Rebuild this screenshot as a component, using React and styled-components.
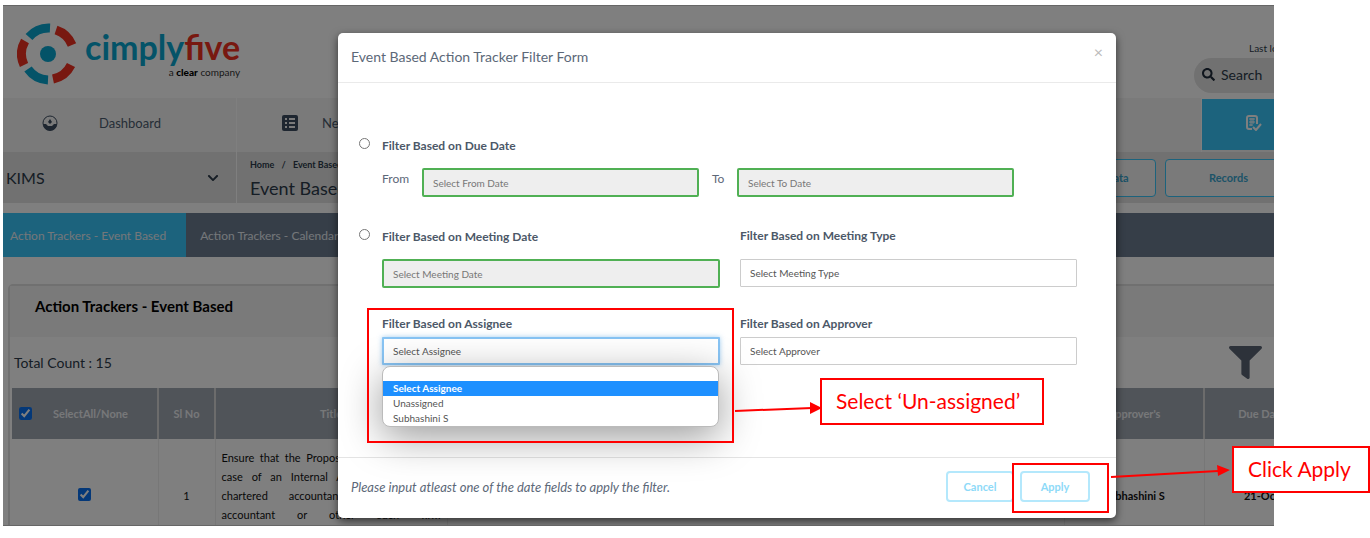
import React from "react";
import styled, { createGlobalStyle } from "styled-components";
import { FaSearch, FaFilter, FaChevronDown } from "react-icons/fa";

const Global = createGlobalStyle`
  *, *::before, *::after { box-sizing: border-box; }
  body { margin: 0; background: #fff; font-family: Lato, "Open Sans", sans-serif; color: #2c3a4a; }
  button, input, select { font-family: inherit; }
`;

const blue = "#38c6fa";
const slate = "#6c7c90";
const red = "#ff0000";

const Figure = styled.main`
  position: relative;
  min-height: 100vh;
  padding: 5px 96px 0 3px;
  overflow: hidden;
`;
const Shot = styled.div`
  position: relative;
  height: calc(100vh - 17px);
  overflow: hidden;
  border-top: 1px solid #666;
  border-bottom: 1px solid #666;
`;
const Page = styled.div`
  position: relative;
  width: calc(100% + 177px);
`;

const Header = styled.header`
  display: flex;
  justify-content: space-between;
  height: 92px;
`;
const Brand = styled.a`
  display: flex;
  align-items: flex-start;
  gap: 6px;
  padding: 17px 0 0 14px;
  text-decoration: none;
`;
const BrandText = styled.span`
  display: flex;
  flex-direction: column;
  align-items: flex-end;
  padding-top: 5px;
`;
const BrandName = styled.span`
  color: #08a6d0;
  font-size: 34px;
  line-height: 38px;
  font-weight: 700;
  em { font-style: normal; color: #f03020; }
`;
const BrandTag = styled.span`
  color: #333;
  font-size: 10px;
  line-height: 12px;
  b { color: #000; font-weight: 900; }
`;
const HeaderSide = styled.div`
  width: 257px;
  padding-top: 36px;
`;
const LastLogin = styled.div`
  padding-left: 55px;
  font-size: 10px;
  line-height: 12px;
  margin-bottom: 4px;
`;
const SearchBox = styled.label`
  display: flex;
  align-items: center;
  gap: 6px;
  height: 35px;
  padding: 0 8px 3px;
  border-radius: 18px;
  background: #e2e2e2;
  color: #1f2b3a;
`;
const SearchInput = styled.input`
  border: 0;
  background: none;
  padding: 0;
  min-width: 0;
  font-size: 14px;
  &::placeholder { color: #2c3a4a; opacity: 1; }
`;

const Nav = styled.nav`
  display: flex;
  height: 54px;
  background: #f5f5f5;
`;
const NavItem = styled.a`
  display: flex;
  align-items: center;
  flex: ${(p) => p.$flex || "0 0 234px"};
  gap: ${(p) => p.$gap || 0}px;
  padding: 0 0 5px ${(p) => p.$pad || 0}px;
  border-right: 1px solid #fff;
  color: #4c5c6e;
  font-size: 13px;
  text-decoration: none;
`;
const ActiveNavItem = styled(NavItem)`
  flex: 0 0 249px;
  height: 52px;
  padding-top: 2px;
  border-top: 1px solid #fff;
  background: ${blue};
  color: #fff;
`;

const Band = styled.div`
  display: flex;
  height: 51px;
  background: #e2e2e2;
`;
const Company = styled.button`
  display: flex;
  align-items: center;
  justify-content: space-between;
  flex: 0 0 234px;
  padding: 0 17px 0 3px;
  border: 0;
  border-right: 1px solid #fff;
  background: none;
  color: #2c3a4a;
  font-size: 16px;
`;
const Crumbs = styled.div`
  flex: 1;
  padding: 6px 0 0 13px;
`;
const CrumbTrail = styled.div`
  font-size: 9px;
  line-height: 13px;
  font-weight: 700;
  color: #2c3a4a;
  span { margin: 0 5px; }
`;
const PageTitle = styled.h1`
  margin: 4px 0 0;
  font-size: 18px;
  line-height: 26px;
  font-weight: 400;
`;
const BandActions = styled.div`
  display: flex;
  align-items: center;
  gap: 9px;
  padding-right: 159px;
`;
const OutlineButton = styled.button`
  width: ${(p) => p.$w || 127}px;
  height: ${(p) => p.$h || 38}px;
  border: 1px solid ${(p) => p.$edge || blue};
  border-radius: 4px;
  background: ${(p) => p.$bg || "#f5f5f5"};
  color: ${(p) => p.$ink || "#3aa6d0"};
  font-size: 11px;
  font-weight: 700;
`;
const FootButton = styled(OutlineButton)`
  height: 31px;
  border: 2px solid #b4e8fc;
  background: #fff;
  color: #8edaf8;
`;

const Tabs = styled.div`
  display: flex;
  height: 44px;
  margin-top: 10px;
  background: ${slate};
`;
const Tab = styled.button`
  padding: ${(p) => (p.$active ? "0 20px 0 7px" : "0 14px")};
  border: 0;
  background: ${(p) => (p.$active ? blue : "transparent")};
  color: #e8eef4;
  font-size: 12px;
`;

const Card = styled.section`
  margin: 27px 5px 0;
  border: 2px solid #e0e0e0;
  border-radius: 5px;
`;
const CardHead = styled.h2`
  display: flex;
  align-items: center;
  height: 51px;
  margin: 0;
  padding: 0 0 12px 25px;
  background: #f5f5f5;
  color: #000;
  font-size: 15px;
  font-weight: 700;
`;
const CardBar = styled.div`
  display: flex;
  align-items: center;
  justify-content: space-between;
  height: 51px;
  padding: 0 182px 0 4px;
  font-size: 14px;
`;

const Table = styled.table`
  width: calc(100% - 4px);
  margin-left: 2px;
  table-layout: fixed;
  border-collapse: collapse;
  font-size: 11px;
`;
const Th = styled.th`
  width: ${(p) => (p.$w ? `${p.$w}px` : "auto")};
  height: 51px;
  padding: 0;
  border-right: 2px solid #d8d8d8;
  background: #a0a8b2;
  color: #eef0f2;
  font-size: 11px;
  font-weight: 700;
`;
const SelectAll = styled.label`
  display: flex;
  align-items: center;
  gap: 21px;
  padding-left: 7px;
`;
const Td = styled.td`
  height: 112px;
  padding: 0 6px;
  border-right: 1px solid #eee;
  color: #111;
  text-align: center;
  font-weight: ${(p) => (p.$bold ? 700 : 400)};
`;
const Task = styled.div`
  line-height: 19px;
  text-align: justify;
  text-align-last: justify;
`;
const Check = styled.input`
  width: 13px;
  height: 13px;
  margin: 0;
  accent-color: #0870f0;
`;

const Backdrop = styled.div`
  position: absolute;
  inset: 0;
  background: rgba(0, 0, 0, 0.5);
`;
const Modal = styled.form`
  position: relative;
  width: 778px;
  margin: 27px auto 0;
  border-radius: 5px;
  background: #fff;
  box-shadow: 0 3px 8px rgba(0, 0, 0, 0.6);
  color: #5c6878;
`;
const ModalHead = styled.div`
  display: flex;
  justify-content: space-between;
  height: 50px;
  padding: 12px 13px 0 13px;
  border-bottom: 1px solid #eaeaea;
`;
const ModalTitle = styled.h3`
  margin: 0;
  font-size: 14px;
  line-height: 24px;
  font-weight: 400;
`;
const Close = styled.button`
  align-self: flex-start;
  padding: 0;
  border: 0;
  background: none;
  color: #bbb;
  font-size: 16px;
  line-height: 14px;
`;
const ModalBody = styled.div`
  display: flex;
  flex-direction: column;
  height: 374px;
  padding: 52px 39px 0 21px;
`;
const Choice = styled.label`
  display: flex;
  align-items: center;
  gap: 12px;
  height: 20px;
  color: #4c5868;
  font-size: 12px;
  font-weight: 700;
`;
const Radio = styled.input`
  width: 11px;
  height: 11px;
  margin: 0 0 4px;
`;
const DateRow = styled.div`
  display: grid;
  grid-template-columns: 40px 277px 38px 277px;
  margin: 13px 0 29px 23px;
  font-size: 12px;
  line-height: 22px;
  label:nth-of-type(2) { padding-left: 13px; }
`;
const Columns = styled.div`
  display: grid;
  grid-template-columns: 361px 337px;
  margin-bottom: ${(p) => p.$after || 0}px;
`;
const Cell = styled.div`
  display: flex;
  flex-direction: column;
  gap: ${(p) => p.$gap}px;
`;
const FieldLabel = styled.label`
  display: block;
  height: 20px;
  line-height: 20px;
  color: #4c5868;
  font-size: 12px;
  font-weight: 700;
`;
const Indent = styled.div`
  position: relative;
  padding-left: 23px;
`;
const Shifted = styled.div`
  padding-left: 20px;
  margin-right: -20px;
`;
const DateInput = styled.input`
  display: block;
  width: 100%;
  height: 29px;
  padding: 0 9px;
  border: 2px solid #50b054;
  border-radius: 2px;
  background: #eee;
  font-size: 10px;
  &::placeholder { color: #777; opacity: 1; }
`;
const Select = styled.select`
  display: block;
  appearance: none;
  width: 100%;
  height: 28px;
  padding: 0 9px 1px;
  border: ${(p) => (p.$open ? "2px solid #88c4f4" : "1px solid #ccc")};
  border-radius: 1px;
  background: #fff;
  color: #555;
  font-size: 10px;
  box-shadow: ${(p) => (p.$open ? "0 0 5px rgba(102, 175, 233, 0.6)" : "none")};
`;
const Menu = styled.ul`
  position: absolute;
  top: 100%;
  left: 23px;
  right: 1px;
  margin: 1px 0 0;
  padding: 14px 0 0;
  border: 1px solid #bbb;
  border-radius: 8px;
  background: #fff;
  box-shadow: 0 10px 40px rgba(0, 0, 0, 0.4);
  list-style: none;
  color: #555;
  font-size: 10px;
  line-height: 15px;
`;
const Option = styled.li`
  padding: 0 10px;
  background: ${(p) => (p.$on ? "#1e90ff" : "none")};
  color: ${(p) => (p.$on ? "#fff" : "inherit")};
  font-weight: ${(p) => (p.$on ? 700 : 400)};
`;
const ModalFoot = styled.div`
  display: flex;
  align-items: center;
  gap: 6px;
  height: 61px;
  padding: 0 26px 3px 13px;
  border-top: 1px solid #e4e4e4;
`;
const Hint = styled.em`
  flex: 1;
  font-size: 13px;
`;

const Callout = styled.div`
  position: absolute;
  left: ${(p) => p.$x}px;
  top: ${(p) => p.$y}px;
  width: ${(p) => p.$w}px;
  height: ${(p) => p.$h}px;
  padding-left: 14px;
  border: 2px solid ${red};
  background: ${(p) => (p.$filled ? "#fff" : "none")};
  color: ${red};
  font-size: 21px;
  line-height: 42px;
  white-space: nowrap;
`;
const Arrows = styled.svg`
  position: absolute;
  left: 0;
  top: 0;
  pointer-events: none;
`;

const Logo = () => (
  <svg width="62" height="62" viewBox="0 0 62 62" fill="none" strokeWidth="9" aria-hidden="true">
    <path d="M12 14A26 26 0 0 1 33 5" stroke="#08a6d0" />
    <path d="M39 7A26 26 0 0 1 55 22" stroke="#f03020" />
    <path d="M54 42A26 26 0 0 1 36 56" stroke="#f03020" />
    <path d="M31 57A26 26 0 0 1 11 46" stroke="#08a6d0" />
    <path d="M7 42A26 26 0 0 1 8 18" stroke="#f03020" />
    <circle cx="31" cy="31" r="8" fill="#08a6d0" />
  </svg>
);

const Gauge = () => (
  <svg width="16" height="16" viewBox="0 0 16 16" aria-hidden="true">
    <circle cx="8" cy="8" r="7" fill="none" stroke="#3c4c60" strokeWidth="1" />
    <path d="M1 9l3 0 2 2h4l2-2h3a7 7 0 0 1-14 0z" fill="#3c4c60" />
    <path d="M8 4l2 3-2 2-2-2z" fill="#3c4c60" />
  </svg>
);

const ListIcon = () => (
  <svg width="16" height="16" viewBox="0 0 16 16" aria-hidden="true">
    <rect width="16" height="16" rx="2" fill="#3c4c60" />
    <path d="M3 4h2M7 4h6M3 8h2M7 8h6M3 12h2M7 12h6" stroke="#f5f5f5" strokeWidth="2" />
  </svg>
);

const DocCheck = () => (
  <svg width="16" height="16" viewBox="0 0 16 16" fill="none" stroke="#fff" aria-hidden="true">
    <path d="M6 14H3a2 2 0 0 1-2-2V3a2 2 0 0 1 2-2h6a2 2 0 0 1 2 2v6" strokeWidth="2" />
    <path d="M3 4h6M3 7h6M3 10h4M5 3v8M7 3v6" strokeWidth="1" />
    <path d="M7 12l3 3 5-6" strokeWidth="2" />
  </svg>
);

export default function App() {
  return (
    <Figure>
      <Global />
      <Shot>
        <Page>
          <Header>
            <Brand href="#">
              <Logo />
              <BrandText>
                <BrandName>cimply<em>five</em></BrandName>
                <BrandTag>a <b>clear</b> company</BrandTag>
              </BrandText>
            </Brand>
            <HeaderSide>
              <LastLogin>Last login</LastLogin>
              <SearchBox>
                <FaSearch size={13} />
                <SearchInput aria-label="Search" placeholder="Search" />
              </SearchBox>
            </HeaderSide>
          </Header>
          <Nav>
            <NavItem href="#" $pad={39} $gap={41}><Gauge />Dashboard</NavItem>
            <NavItem href="#" $flex="1" $pad={45} $gap={24}><ListIcon />New</NavItem>
            <ActiveNavItem href="#" $pad={44} aria-label="Trackers"><DocCheck /></ActiveNavItem>
          </Nav>
          <Band>
            <Company type="button">KIMS<FaChevronDown size={12} /></Company>
            <Crumbs>
              <CrumbTrail>Home <span>/</span> Event Based</CrumbTrail>
              <PageTitle>Event Based</PageTitle>
            </Crumbs>
            <BandActions>
              <OutlineButton type="button">Company Data</OutlineButton>
              <OutlineButton type="button">Records</OutlineButton>
            </BandActions>
          </Band>
          <Tabs>
            <Tab type="button" $active>Action Trackers - Event Based</Tab>
            <Tab type="button">Action Trackers - Calendar</Tab>
          </Tabs>
          <Card>
            <CardHead>Action Trackers - Event Based</CardHead>
            <CardBar>Total Count : 15<FaFilter size={33} color="#5a6474" /></CardBar>
            <Table>
              <thead>
                <tr>
                  <Th $w={146}>
                    <SelectAll><Check type="checkbox" defaultChecked />SelectAll/None</SelectAll>
                  </Th>
                  <Th $w={57}>Sl No</Th>
                  <Th $w={232}>Title</Th>
                  <Th />
                  <Th $w={140}>Approver's</Th>
                  <Th $w={115}>Due Date</Th>
                  <Th $w={122} />
                </tr>
              </thead>
              <tbody>
                <tr>
                  <Td><Check type="checkbox" defaultChecked aria-label="Select row 1" /></Td>
                  <Td>1</Td>
                  <Td>
                    <Task>Ensure that the Proposed appointments, in</Task>
                    <Task>case of an Internal Auditor must be a</Task>
                    <Task>chartered accountant or a cost</Task>
                    <Task>accountant or other such firm</Task>
                    <Task>professional as decided by the Board</Task>
                  </Td>
                  <Td />
                  <Td $bold>Subhashini S</Td>
                  <Td $bold>21-Oct</Td>
                  <Td />
                </tr>
              </tbody>
            </Table>
          </Card>
        </Page>
        <Backdrop>
          <Page>
            <Modal onSubmit={(e) => e.preventDefault()}>
              <ModalHead>
                <ModalTitle>Event Based Action Tracker Filter Form</ModalTitle>
                <Close type="button" aria-label="Close">×</Close>
              </ModalHead>
              <ModalBody>
                <Choice><Radio type="radio" name="basis" />Filter Based on Due Date</Choice>
                <DateRow>
                  <label htmlFor="from">From</label>
                  <DateInput id="from" placeholder="Select From Date" />
                  <label htmlFor="to">To</label>
                  <DateInput id="to" placeholder="Select To Date" />
                </DateRow>
                <Columns $after={26}>
                  <Cell $gap={13}>
                    <Choice><Radio type="radio" name="basis" />Filter Based on Meeting Date</Choice>
                    <Indent>
                      <DateInput aria-label="Meeting date" placeholder="Select Meeting Date" />
                    </Indent>
                  </Cell>
                  <Cell $gap={13}>
                    <Shifted>
                      <FieldLabel htmlFor="type">Filter Based on Meeting Type</FieldLabel>
                    </Shifted>
                    <Shifted>
                      <Select id="type"><option>Select Meeting Type</option></Select>
                    </Shifted>
                  </Cell>
                </Columns>
                <Columns>
                  <Cell $gap={3}>
                    <Indent><FieldLabel htmlFor="assignee">Filter Based on Assignee</FieldLabel></Indent>
                    <Indent>
                      <Select id="assignee" $open><option>Select Assignee</option></Select>
                      <Menu role="listbox" aria-label="Assignee">
                        <Option role="option" $on>Select Assignee</Option>
                        <Option role="option">Unassigned</Option>
                        <Option role="option">Subhashini S</Option>
                      </Menu>
                    </Indent>
                  </Cell>
                  <Cell $gap={3}>
                    <Shifted>
                      <FieldLabel htmlFor="approver">Filter Based on Approver</FieldLabel>
                    </Shifted>
                    <Shifted>
                      <Select id="approver"><option>Select Approver</option></Select>
                    </Shifted>
                  </Cell>
                </Columns>
              </ModalBody>
              <ModalFoot>
                <Hint>Please input atleast one of the date fields to apply the filter.</Hint>
                <FootButton type="button" $w={68}>Cancel</FootButton>
                <FootButton type="submit" $w={70}>Apply</FootButton>
              </ModalFoot>
            </Modal>
          </Page>
        </Backdrop>
      </Shot>
      <Callout $x={367} $y={308} $w={367} $h={135} />
      <Callout $x={1012} $y={463} $w={97} $h={50} />
      <Arrows width="1370" height="538" viewBox="0 0 1370 538" aria-hidden="true">
        <path d="M735 411L812 408M1111 477L1218 471" stroke={red} strokeWidth="2" />
        <path d="M810 402L822 408L810 414zM1217 465L1230 470L1218 476z" fill={red} />
      </Arrows>
      <Callout $x={820} $y={378} $w={224} $h={47} $filled>Select ‘Un-assigned’</Callout>
      <Callout $x={1232} $y={446} $w={138} $h={47} $filled>Click Apply</Callout>
    </Figure>
  );
}
